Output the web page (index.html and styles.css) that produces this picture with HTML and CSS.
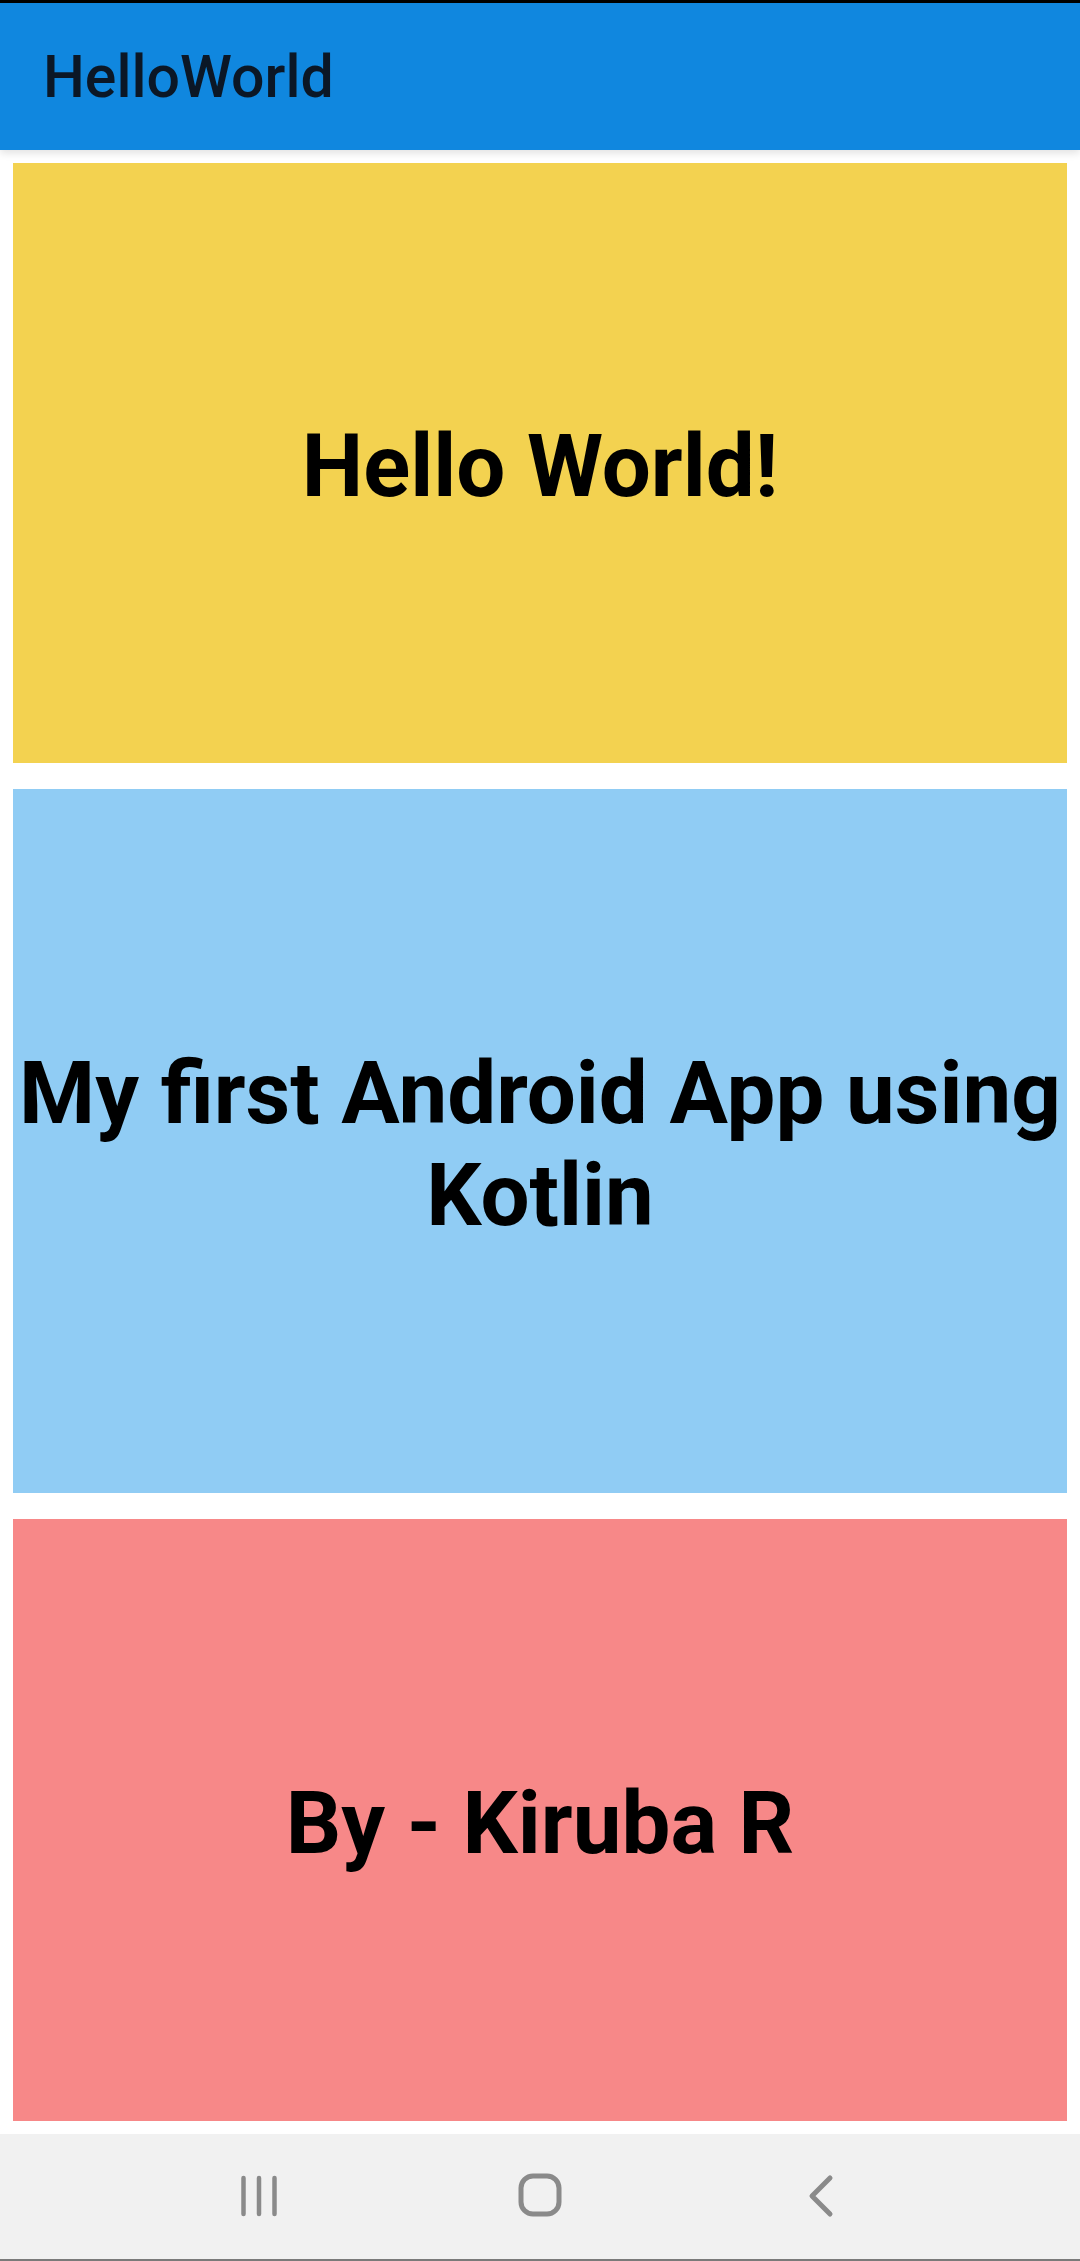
FILE: index.html
```html
<!DOCTYPE html>
<html>
<head>
<meta charset="utf-8">
<title>HelloWorld</title>
<link rel="stylesheet" href="styles.css">
</head>
<body>
<div class="screen">
  <header class="appbar">
    <h1 class="appbar-title">HelloWorld</h1>
  </header>
  <main class="content">
    <section class="card card-yellow"><p class="card-text">Hello World!</p></section>
    <section class="card card-blue"><p class="card-text">My first Android App using<br>Kotlin</p></section>
    <section class="card card-red"><p class="card-text">By - Kiruba R</p></section>
  </main>
  <nav class="navbar">
    <span class="nav-btn">
      <svg width="40" height="44" viewBox="0 0 40 44"><g stroke="#8a8a8a" stroke-width="4.5" stroke-linecap="round"><line x1="4.5" y1="4" x2="4.5" y2="40"/><line x1="20" y1="4" x2="20" y2="40"/><line x1="35.5" y1="4" x2="35.5" y2="40"/></g></svg>
    </span>
    <span class="nav-btn">
      <svg width="48" height="48" viewBox="0 0 48 48"><rect x="5" y="4" width="38" height="38" rx="12" fill="none" stroke="#8a8a8a" stroke-width="5"/></svg>
    </span>
    <span class="nav-btn">
      <svg width="32" height="44" viewBox="0 0 32 44"><polyline points="25,4 7,22 25,40" fill="none" stroke="#8a8a8a" stroke-width="5" stroke-linecap="round" stroke-linejoin="round"/></svg>
    </span>
  </nav>
</div>
</body>
</html>
```
FILE: styles.css
```css
html, body {
  margin: 0;
  padding: 0;
  background: #ffffff;
}
.screen {
  width: 1080px;
  height: 2261px;
  display: flex;
  flex-direction: column;
  font-family: Roboto, "Noto Sans", sans-serif;
}
.appbar {
  height: 147px;
  border-top: 3px solid #000;
  background: #1087df;
  display: flex;
  align-items: center;
  padding-left: 43px;
  box-shadow: 0 3px 8px rgba(0, 0, 0, 0.12);
  position: relative;
  z-index: 1;
}
.appbar-title {
  margin: 0;
  font-size: 59px;
  font-weight: 500;
  color: #0b1726;
}
.content {
  padding: 13px;
  display: flex;
  flex-direction: column;
  gap: 26px;
}
.card {
  box-sizing: border-box;
  padding-top: 8px;
  display: flex;
  align-items: center;
  justify-content: center;
  text-align: center;
}
.card-yellow { background: #f3d250; height: 600px; }
.card-blue { background: #90ccf4; height: 704px; }
.card-red { background: #f78888; height: 602px; }
.card-text {
  margin: 0;
  font-size: 87px;
  font-weight: 700;
  color: #000;
  line-height: 1.17;
  white-space: nowrap;
}
.navbar {
  flex: 1;
  background: #f1f1f1;
  border-bottom: 2px solid #7a7a7a;
  display: flex;
  align-items: center;
  justify-content: center;
  padding-bottom: 2px;
}
.nav-btn {
  width: 281px;
  display: flex;
  justify-content: center;
}
```
